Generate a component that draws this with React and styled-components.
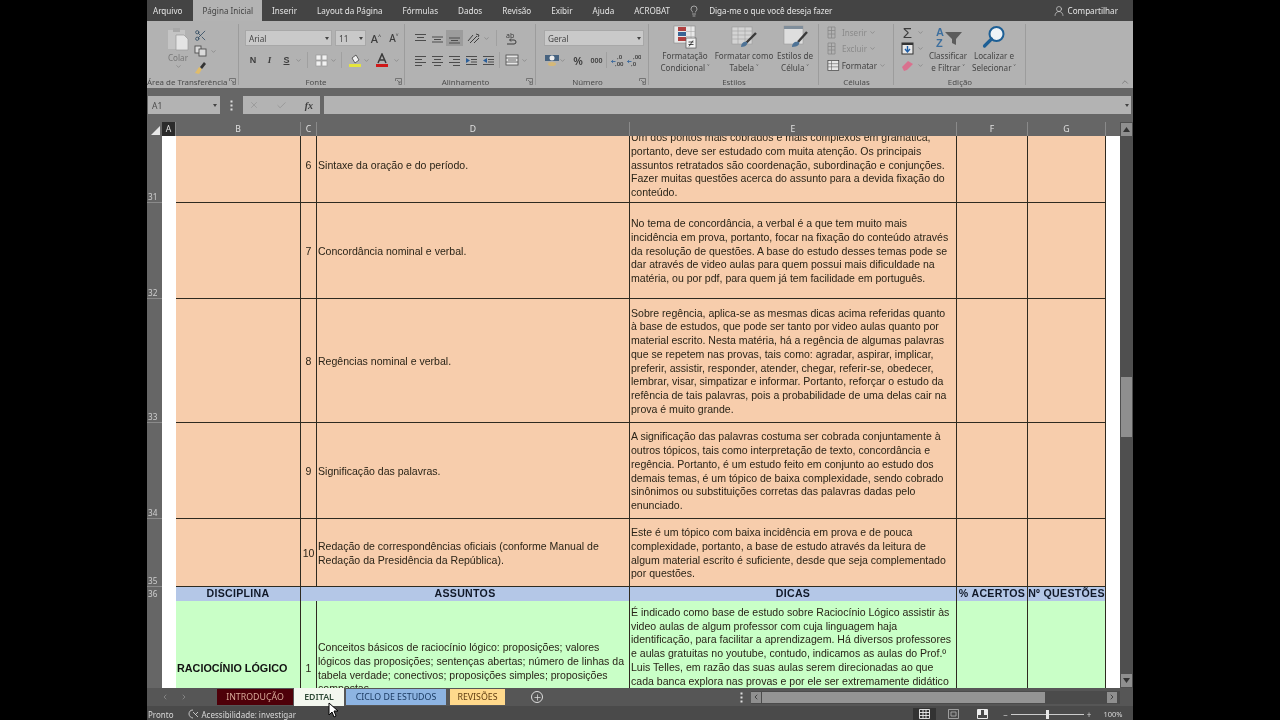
import styled, { createGlobalStyle } from "styled-components";
import { Scissors, Lightbulb, UserRound, Plus, ChevronDown, ChevronUp, ChevronLeft, ChevronRight, X, Check } from "lucide-react";

const Global = createGlobalStyle`
  html, body { margin: 0; padding: 0; background: #000; }
  #root { width: 1280px; height: 720px; overflow: hidden; }
  * { box-sizing: border-box; }
`;

const Page = styled.div`
  width: 1280px;
  height: 720px;
  display: flex;
  justify-content: center;
  background: #000;
`;

const Win = styled.div`
  position: relative;
  width: 986px;
  height: 720px;
  display: flex;
  flex-direction: column;
  background: #666;
  font-family: "Noto Sans", "Open Sans", sans-serif;
  filter: blur(0.35px);
`;

/* menu tabs */
const Menu = styled.div`
  height: 21px;
  display: flex;
  align-items: center;
  background: #444;
  color: #e4e4e4;
  font-size: 8.1px;
`;

const MenuItem = styled.div`
  height: 21px;
  line-height: 21px;
  padding: ${(p) => (p.$first ? "0 11px 0 6px" : p.$active ? "0 9px" : "0 10px")};
  background: ${(p) => (p.$active ? "#b3b3b3" : "transparent")};
  color: ${(p) => (p.$active ? "#444" : "#e4e4e4")};
`;

const Tell = styled.div`
  display: flex;
  align-items: center;
  gap: 9px;
  margin-left: 8px;
  flex: 1;
`;

const Share = styled.div`
  display: flex;
  align-items: center;
  gap: 3px;
  margin-right: 15px;
`;

/* ribbon */
const Ribbon = styled.div`
  position: relative;
  height: 67px;
  display: flex;
  background: #b2b2b2;
  color: #454545;
  font-size: 8.1px;
`;

const Group = styled.div`
  position: relative;
  width: ${(p) => p.$w}px;
  flex: none;
  display: flex;
  flex-direction: column;
  padding: ${(p) => p.$top ?? 9}px ${(p) => p.$side ?? 6}px 0;
  &::after {
    content: "";
    position: absolute;
    right: 0;
    top: 3px;
    bottom: 3px;
    width: 1px;
    background: #9c9c9c;
  }
`;

const GroupLabel = styled.div`
  position: absolute;
  left: 0;
  right: 0;
  bottom: 1px;
  padding-right: ${(p) => p.$pr ?? 0}px;
  text-align: center;
  font-size: 7.9px;
  line-height: 10px;
  color: #4a4a4a;
  white-space: nowrap;
`;

const Launcher = styled.svg`
  position: absolute;
  right: 3px;
  bottom: 3px;
  width: 7px;
  height: 7px;
`;

const Rows = styled.div`
  display: flex;
  flex-direction: column;
  gap: ${(p) => p.$gap ?? 6}px;
`;

const Line = styled.div`
  height: 16px;
  display: flex;
  align-items: center;
  gap: ${(p) => p.$gap ?? 0}px;
`;

const Select = styled.div`
  width: ${(p) => p.$w}px;
  height: 16px;
  flex: none;
  margin-right: ${(p) => p.$mr ?? 0}px;
  display: flex;
  align-items: center;
  justify-content: space-between;
  padding: 0 2px 0 3px;
  background: #c9c9c9;
  border: 1px solid #a8a8a8;
  font-size: 8.2px;
`;

const Caret = styled.span`
  width: 0;
  height: 0;
  border-left: 2.5px solid transparent;
  border-right: 2.5px solid transparent;
  border-top: 3px solid #444;
  flex: none;
`;

const Tool = styled.div`
  width: ${(p) => p.$w ?? 17}px;
  height: 16px;
  flex: none;
  display: flex;
  align-items: center;
  justify-content: center;
  background: ${(p) => (p.$on ? "#9c9c9c" : "transparent")};
  font: ${(p) => p.$font ?? "inherit"};
  color: #3d3d3d;
`;

const Chev = styled(ChevronDown).attrs({ size: 7, strokeWidth: 1.5 })`
  color: #666;
  flex: none;
`;

const VSep = styled.span`
  width: 1px;
  height: 16px;
  background: #a0a0a0;
  margin: 0 ${(p) => p.$m ?? 3}px;
  flex: none;
`;

const BigRow = styled.div`
  display: flex;
  align-items: flex-start;
`;

const Big = styled.div`
  width: ${(p) => p.$w}px;
  flex: none;
  margin-top: ${(p) => p.$mt ?? 0}px;
  display: flex;
  flex-direction: column;
  align-items: center;
  text-align: center;
  line-height: 12px;
  white-space: nowrap;
  & > svg:first-child {
    margin-bottom: 1px;
  }
`;

const Paste = styled.div`
  display: flex;
  padding-left: 15px;
`;

const PasteCol = styled.div`
  width: 32px;
  display: flex;
  flex-direction: column;
  align-items: center;
  color: #777;
  line-height: 11px;
  svg:first-child {
    margin-bottom: 1px;
  }
`;

const CellAction = styled.div`
  height: 16px;
  display: flex;
  align-items: center;
  gap: 2px;
  color: ${(p) => (p.$off ? "#8a8a8a" : "#444")};
  white-space: nowrap;
`;

const Collapse = styled(ChevronUp).attrs({ size: 10, strokeWidth: 1.3 })`
  position: absolute;
  right: 3px;
  bottom: 1px;
  color: #555;
`;

/* formula bar */
const FormulaRow = styled.div`
  height: 34px;
  display: flex;
  align-items: flex-start;
  padding-top: 8px;
  background: #666;
`;

const NameBox = styled.div`
  width: 72px;
  height: 18px;
  margin-left: 1px;
  display: flex;
  align-items: center;
  justify-content: space-between;
  padding: 0 3px 0 4px;
  background: #b3b3b3;
  font-size: 8.5px;
  color: #4d4d4d;
`;

const DotsCol = styled.div`
  width: ${(p) => p.$w}px;
  height: ${(p) => p.$h}px;
  flex: none;
  margin-left: ${(p) => (p.$auto ? "auto" : 0)};
  display: flex;
  align-items: center;
  justify-content: center;
`;

const FxBox = styled.div`
  width: 77px;
  height: 18px;
  display: flex;
  align-items: center;
  justify-content: space-between;
  padding: 0 7px 0 6px;
  background: #b3b3b3;
  color: #8b8b8b;
  font-size: 10px;
`;

const FxLabel = styled.span`
  font-family: "Liberation Serif", serif;
  font-style: italic;
  font-weight: 700;
  color: #3f3f3f;
`;

const Input = styled.div`
  flex: 1;
  height: 18px;
  margin: 0 2px 0 4px;
  display: flex;
  align-items: center;
  justify-content: flex-end;
  padding-right: 2px;
  background: #b3b3b3;
`;

/* sheet */
const Sheet = styled.div`
  display: flex;
  height: 566px;
`;

const SheetBody = styled.div`
  width: 973px;
  display: flex;
  flex-direction: column;
`;

const columns = "15px 14px 125px 16px 313px 327px 71px 78px 14px";

const ColHeads = styled.div`
  height: 14px;
  display: grid;
  grid-template-columns: ${columns};
  background: #666;
  color: #e0e0e0;
  font-size: 8.6px;
  font-family: "Noto Sans", sans-serif;
  line-height: 14px;
  text-align: center;
`;

const ColHead = styled.div`
  border-right: 1px solid ${(p) => (p.$none ? "transparent" : "#8a8a8a")};
  background: ${(p) => (p.$sel ? "#2b2b2b" : "transparent")};
`;

const Corner = styled.div`
  display: flex;
  align-items: flex-end;
  justify-content: flex-end;
  padding: 0 2px 1px 0;
`;

const Grid = styled.div`
  height: 552px;
  overflow: hidden;
  font-family: "Liberation Sans", Arial, sans-serif;
`;

const RowsWrap = styled.div`
  margin-top: -9px;
`;

const Row = styled.div`
  height: ${(p) => p.$h}px;
  display: grid;
  grid-template-columns: ${columns};
`;

const RowNum = styled.div`
  background: #666;
  color: #cfcfcf;
  font-family: "Noto Sans", sans-serif;
  font-size: 8.2px;
  line-height: 10px;
  display: flex;
  align-items: ${(p) => (p.$mid ? "center" : "flex-end")};
  padding-left: 1px;
  border-bottom: 1px solid #8a8a8a;
`;

const White = styled.div`
  background: #fff;
`;

const Cell = styled.div`
  background: ${(p) => p.$bg};
  border-right: 1px solid #2e2a20;
  border-bottom: 1px solid #2e2a20;
  display: flex;
  align-items: ${(p) => (p.$pt ? "flex-start" : "center")};
  justify-content: ${(p) => p.$justify ?? "flex-start"};
  padding: ${(p) => p.$pt ?? 2}px 1px 0 1px;
  font-size: 10.55px;
  line-height: 13.7px;
  color: #2a2418;
  white-space: pre-line;
  grid-column: ${(p) => p.$span ?? "auto"};
`;

const HeadCell = styled(Cell)`
  font-weight: 700;
  font-size: 10.6px;
  letter-spacing: 0.3px;
  color: #101828;
  white-space: nowrap;
  justify-content: center;
  padding: 0;
`;

const Subject = styled.span`
  font-weight: 700;
  font-size: 10.8px;
  color: #111;
  white-space: nowrap;
`;

/* scrollbars */
const VScroll = styled.div`
  width: 13px;
  display: flex;
  flex-direction: column;
  background: #4f4f4f;
  padding: 1px 0;
`;

const ScrollBtn = styled.div`
  width: 11px;
  height: 13px;
  margin-left: 1px;
  flex: none;
  display: flex;
  align-items: center;
  justify-content: center;
  background: #8f8f8f;
  color: #333;
`;

const VTrack = styled.div`
  flex: 1;
  padding-top: 241px;
`;

const VThumb = styled.div`
  width: 11px;
  height: 60px;
  margin-left: 1px;
  background: #8f8f8f;
`;

/* sheet tabs */
const TabsBar = styled.div`
  height: 18px;
  display: flex;
  align-items: center;
  background: #565656;
  color: #ddd;
  font-size: 8.8px;
`;

const TabNav = styled.div`
  width: 70px;
  display: flex;
  gap: 11px;
  padding-left: 14px;
  color: #9a9a9a;
`;

const Tab = styled.div`
  width: ${(p) => p.$w}px;
  margin-right: ${(p) => p.$mr ?? 1}px;
  height: ${(p) => (p.$active ? 18 : 16)}px;
  flex: none;
  display: flex;
  align-items: center;
  justify-content: center;
  background: ${(p) => p.$bg};
  color: ${(p) => p.$color};
  font-weight: ${(p) => (p.$active ? 600 : 400)};
  white-space: nowrap;
`;

const AddSheet = styled.div`
  width: 12px;
  height: 12px;
  margin-left: 25px;
  border: 1px solid #ddd;
  border-radius: 50%;
  display: flex;
  align-items: center;
  justify-content: center;
  color: #ddd;
`;

const HScroll = styled.div`
  width: 369px;
  margin-right: 13px;
  height: 13px;
  display: flex;
  align-items: center;
  background: #4b4b4b;
  color: #333;
`;

const HBtn = styled.div`
  width: 10px;
  height: 11px;
  flex: none;
  margin-left: ${(p) => (p.$end ? "auto" : "0")};
  margin-right: ${(p) => (p.$end ? "3px" : "1px")};
  display: flex;
  align-items: center;
  justify-content: center;
  background: #8f8f8f;
`;

const HThumb = styled.div`
  width: 283px;
  height: 11px;
  background: #949494;
`;

/* status bar */
const Status = styled.div`
  height: 14px;
  display: flex;
  align-items: center;
  background: #4a4a4a;
  color: #d8d8d8;
  font-size: 8px;
  line-height: 11px;
  padding: 2px 0 0 1px;
`;

const Access = styled.div`
  display: flex;
  align-items: center;
  gap: 2px;
  margin-left: 14px;
`;

const ViewBtn = styled.div`
  width: 23px;
  height: 12px;
  margin-right: 6px;
  display: flex;
  align-items: center;
  justify-content: center;
  background: ${(p) => (p.$on ? "#333" : "transparent")};
`;

const Views = styled.div`
  margin-left: auto;
  display: flex;
  align-items: center;
`;

const Zoom = styled.div`
  display: flex;
  align-items: center;
  gap: 3px;
  margin-left: 3px;
  margin-right: 10.5px;
`;

const ZoomValue = styled.span`
  margin-left: 9px;
  font-size: 7.5px;
`;

const Slider = styled.div`
  position: relative;
  width: 73px;
  height: 1px;
  background: #ccc;
  &::after {
    content: "";
    position: absolute;
    left: 35px;
    top: -4px;
    width: 3px;
    height: 9px;
    background: #e8e8e8;
  }
`;

const Pointer = styled.svg`
  position: absolute;
  left: 181px;
  top: 702px;
  width: 11px;
  height: 16px;
`;

/* ribbon drawings */
const PasteIcon = () => (
  <svg width="22" height="24" viewBox="0 0 22 24">
    <rect x="1" y="3" width="17" height="19" fill="#c4c4c4" />
    <rect x="6" y="1" width="7" height="4" fill="#a8a8a8" />
    <path d="M9 8h8l4 4v11H9z" fill="#e4e4e4" stroke="#9a9a9a" strokeWidth="0.7" />
  </svg>
);

const CopyIcon = () => (
  <svg width="13" height="12" viewBox="0 0 13 12" fill="#dadada" stroke="#4e4e4e" strokeWidth="0.9">
    <rect x="1" y="1" width="6" height="7" />
    <rect x="5" y="4" width="7" height="7" />
  </svg>
);

const BrushIcon = () => (
  <svg width="13" height="13" viewBox="0 0 13 13">
    <path d="M1 12l4-6 3 2-3 5z" fill="#e0bc6a" />
    <path d="M6 6l4-5 2 2-4 5z" fill="#333" />
  </svg>
);

const Lines = ({ rows }) => (
  <svg width="13" height="11" viewBox="0 0 13 11" stroke="#4c4c4c" strokeWidth="1">
    {rows.map(([a, b], i) => (
      <path key={i} d={`M${a} ${1.5 + i * 3}H${b}`} />
    ))}
  </svg>
);

const Indent = ({ flip }) => (
  <svg width="13" height="11" viewBox="0 0 13 11">
    <path d="M1 1.5H12M6 4.5H12M6 7H12M1 9.5H12" stroke="#4c4c4c" />
    <path d={flip ? "M5 5.5L1 3V8Z" : "M1 5.5L5 3V8Z"} fill="#2b5f9a" />
  </svg>
);

const BorderIcon = () => (
  <svg width="13" height="13" viewBox="0 0 13 13" fill="#f2f2f2" stroke="#999" strokeWidth="0.7">
    <rect x="1" y="1" width="5" height="5" />
    <rect x="7" y="1" width="5" height="5" />
    <rect x="1" y="7" width="5" height="5" />
    <rect x="7" y="7" width="5" height="5" />
  </svg>
);

const FillIcon = () => (
  <svg width="14" height="14" viewBox="0 0 14 14">
    <path d="M4 5l4-3 3 5-4 3z" fill="#f0f0f0" stroke="#444" strokeWidth="0.8" />
    <rect x="1" y="11" width="12" height="3" fill="#e6e63c" />
  </svg>
);

const FontColor = () => (
  <svg width="14" height="14" viewBox="0 0 14 14">
    <path d="M3 10L7 1l4 9M4.6 7h4.8" fill="none" stroke="#3a3a3a" strokeWidth="1.5" />
    <rect x="1" y="11" width="12" height="3" fill="#d01818" />
  </svg>
);

const OrientIcon = () => (
  <svg width="13" height="13" viewBox="0 0 13 13" stroke="#3f3f3f" fill="none">
    <path d="M1 9L6 3M3 11l7-7M7 11l5-5" />
    <path d="M9 2l3 1-1 2" />
  </svg>
);

const WrapIcon = () => (
  <svg width="13" height="15" viewBox="0 0 13 15" fill="none" stroke="#3a3a3a">
    <text x="1" y="7" fontSize="7" fontFamily="Noto Sans" stroke="none" fill="#3a3a3a">ab</text>
    <path d="M2 13h7a2 2 0 0 0 0-4H5M6 7.5L4.5 9l1.5 1.5" />
  </svg>
);

const MergeIcon = () => (
  <svg width="14" height="12" viewBox="0 0 14 12" fill="#e6e6e6" stroke="#4a4a4a" strokeWidth="0.8">
    <rect x="1" y="1" width="12" height="10" />
    <path d="M1 4h12M1 8h12M3 6h8" />
  </svg>
);

const MoneyIcon = () => (
  <svg width="14" height="13" viewBox="0 0 14 13">
    <rect x="0" y="1" width="14" height="6" fill="#46627f" />
    <circle cx="7" cy="4" r="2.5" fill="#eee" />
    <ellipse cx="7" cy="10" rx="4" ry="2" fill="#d4b879" />
  </svg>
);

const DecimalIcon = ({ top, bottom }) => (
  <svg width="14" height="14" viewBox="0 0 14 14" fill="#3f3f3f" fontFamily="Noto Sans" fontSize="6" fontWeight="600">
    <text x="6" y="6">{top}</text>
    <text x="4" y="13">{bottom}</text>
    <path d="M0.5 8.5h4M0.5 8.5l1.6-1.4M0.5 8.5l1.6 1.4" stroke="#2b5f9a" strokeWidth="0.8" fill="none" />
  </svg>
);

const CondIcon = () => (
  <svg width="24" height="24" viewBox="0 0 24 24">
    <rect x="1" y="1" width="21" height="17" fill="#e8e8e8" stroke="#888" strokeWidth="0.6" />
    <rect x="5" y="2" width="8" height="4" fill="#b04040" />
    <rect x="5" y="7" width="8" height="4" fill="#3a6595" />
    <rect x="5" y="12" width="8" height="4" fill="#b04040" />
    <path d="M13 6.5H22M13 11.5H22M18 1V18" stroke="#aaa" strokeWidth="0.6" />
    <rect x="13" y="13" width="10" height="10" fill="#f2f2f2" stroke="#555" strokeWidth="0.7" />
    <path d="M15.5 17h5M15.5 19.5h5M20 15.5l-4 6" stroke="#222" strokeWidth="0.8" />
  </svg>
);

const TableIcon = () => (
  <svg width="26" height="24" viewBox="0 0 26 24">
    <rect x="1" y="2" width="20" height="17" fill="#d4d4d4" stroke="#999" strokeWidth="0.6" />
    <path d="M1 6H21M1 10H21M1 14H21M7 2V19M14 2V19" stroke="#a8a8a8" strokeWidth="0.7" />
    <path d="M25 8L15 18" stroke="#3a3a3a" strokeWidth="2.4" />
    <path d="M10 22c0-4 3-6 6-5 1 2-1 5-6 5z" fill="#4e7396" />
  </svg>
);

const StyleIcon = () => (
  <svg width="26" height="24" viewBox="0 0 26 24">
    <rect x="2" y="1" width="19" height="18" fill="#dedede" stroke="#999" strokeWidth="0.6" />
    <rect x="2" y="1" width="19" height="3" fill="#7f8d9a" />
    <path d="M25 7L16 17" stroke="#3a3a3a" strokeWidth="2.4" />
    <path d="M10 22c0-4 3-6 7-5 1 2-1 5-7 5z" fill="#4e7396" />
  </svg>
);

const MiniCells = ({ color }) => (
  <svg width="13" height="13" viewBox="0 0 13 13" fill="none" stroke={color} strokeWidth="0.8">
    <path d="M1 1h7v11H1zM1 4.5h7M1 8h7M4.5 1v11" />
  </svg>
);

const FormatCells = () => (
  <svg width="14" height="13" viewBox="0 0 14 13">
    <rect x="1" y="1" width="12" height="11" fill="#e6e6e6" stroke="#444" strokeWidth="0.8" />
    <path d="M1 4.5h12M1 8h12M5 1v11" stroke="#666" strokeWidth="0.7" />
  </svg>
);

const FillDown = () => (
  <svg width="13" height="13" viewBox="0 0 13 13">
    <rect x="1" y="1" width="11" height="11" fill="#e8e8e8" stroke="#333" />
    <rect x="1" y="1" width="11" height="2" fill="#333" />
    <path d="M6.5 4v5M4 7l2.5 3L9 7" stroke="#1f5fa8" fill="none" strokeWidth="1.4" />
  </svg>
);

const Eraser = () => (
  <svg width="13" height="13" viewBox="0 0 13 13">
    <path d="M1 8l6-6 5 3-6 6-3 1z" fill="#d9718e" />
  </svg>
);

const SortIcon = () => (
  <svg width="30" height="24" viewBox="0 0 30 24">
    <text x="3" y="11" fontSize="11" fontFamily="Liberation Sans" fontWeight="700" fill="#3d6f9e">A</text>
    <text x="3" y="22" fontSize="11" fontFamily="Liberation Sans" fontWeight="700" fill="#3d6f9e">Z</text>
    <path d="M12 7h17l-6 7v6l-4-2v-4z" fill="#5c5c5c" />
  </svg>
);

const FindIcon = () => (
  <svg width="24" height="24" viewBox="0 0 24 24">
    <circle cx="14.5" cy="9" r="7" fill="#eef3f7" stroke="#1d5f95" strokeWidth="2" />
    <path d="M9.5 14L2.5 21" stroke="#1d5f95" strokeWidth="3.2" strokeLinecap="round" />
  </svg>
);

const VDots = ({ color }) => (
  <svg width="3" height="11" viewBox="0 0 3 11" fill={color}>
    <rect x="0.5" y="0.5" width="2" height="2" />
    <rect x="0.5" y="4.5" width="2" height="2" />
    <rect x="0.5" y="8.5" width="2" height="2" />
  </svg>
);

const Tri = ({ up }) => (
  <svg width="7" height="5" viewBox="0 0 7 5" fill="#333">
    <path d={up ? "M3.5 0L7 5H0Z" : "M3.5 5L7 0H0Z"} />
  </svg>
);

const Launch = () => (
  <Launcher viewBox="0 0 7 7" fill="none" stroke="#666" strokeWidth="0.8">
    <path d="M0.5 3V0.5H6.5V6.5H3.5M2 2l3 3M5 3v2H3" />
  </Launcher>
);

const GridView = () => (
  <svg width="11" height="10" viewBox="0 0 11 10" fill="none" stroke="#eee" strokeWidth="0.9">
    <path d="M.5.5h10v9H.5zM.5 3.5h10M.5 6.5h10M4 .5v9M7 .5v9" />
  </svg>
);

const PageView = () => (
  <svg width="11" height="10" viewBox="0 0 11 10" fill="none" stroke="#a8a8a8" strokeWidth="0.9">
    <path d="M.5.5h10v9H.5zM3 3h5v4H3z" />
  </svg>
);

const BreakView = () => (
  <svg width="11" height="10" viewBox="0 0 11 10">
    <path d="M.5.5h10v9H.5z" fill="none" stroke="#eee" />
    <path d="M1 1h3v5H1zM7 1h3v5H7z" fill="#eee" />
  </svg>
);

const Access11y = () => (
  <svg width="12" height="10" viewBox="0 0 12 10" fill="none" stroke="#cfcfcf" strokeWidth="0.9">
    <path d="M5 1C2 1 1 3 1 5s2 4 4 4M5 3l5 5M10 3L7 6" />
  </svg>
);

const peach = "#f7cdac";
const green = "#c9ffc7";
const blue = "#b4c7e7";

const rows = [
  {
    n: "31",
    h: 76,
    c: "6",
    d: "Sintaxe da oração e do período.",
    e: "Um dos pontos mais cobrados e mais complexos em gramática,\nportanto, deve ser estudado com muita atenção.  Os principais\nassuntos retratados são coordenação, subordinação e conjunções.\nFazer muitas questões acerca do assunto para a devida fixação do\nconteúdo.",
  },
  {
    n: "32",
    h: 96,
    c: "7",
    d: "Concordância nominal e verbal.",
    e: "No tema de concordância, a verbal é a que tem muito mais\nincidência em prova, portanto, focar na fixação do conteúdo através\nda resolução de questões. A base do estudo desses temas pode se\ndar através de video aulas para quem possui mais dificuldade na\nmatéria, ou por pdf, para quem já tem facilidade em português.",
  },
  {
    n: "33",
    h: 124,
    c: "8",
    d: "Regências nominal e verbal.",
    e: "Sobre regência, aplica-se as mesmas dicas acima referidas quanto\nà base de estudos, que pode ser tanto por video aulas quanto por\nmaterial escrito.  Nesta matéria, há a regência de algumas palavras\nque se repetem nas provas, tais como: agradar, aspirar, implicar,\npreferir, assistir, responder, atender, chegar, referir-se, obedecer,\nlembrar, visar, simpatizar e informar. Portanto, reforçar o estudo da\nrefência de tais palavras, pois a probabilidade de uma delas cair na\nprova é muito grande.",
  },
  {
    n: "34",
    h: 96,
    c: "9",
    d: "Significação das palavras.",
    e: "A significação das palavras costuma ser cobrada conjuntamente à\noutros tópicos, tais como interpretação de texto, concordância e\nregência. Portanto, é um estudo feito em conjunto ao estudo dos\ndemais temas, é um tópico de baixa complexidade, sendo cobrado\nsinônimos ou substituições corretas das palavras dadas pelo\nenunciado.",
  },
  {
    n: "35",
    h: 68,
    c: "10",
    d: "Redação de correspondências oficiais (conforme Manual de\nRedação da Presidência da República).",
    e: "Este é um tópico com baixa incidência em prova e de pouca\ncomplexidade, portanto, a base de estudo através da leitura de\nalgum material escrito é suficiente, desde que seja complementado\npor questões.",
  },
];

const Ac = ({ c, w = 17 }) => <Tool $w={w}>{c}</Tool>;

export default function App() {
  return (
    <Page>
      <Global />
      <Win>
        <Menu>
          <MenuItem $first>Arquivo</MenuItem>
          <MenuItem $active>Página Inicial</MenuItem>
          <MenuItem>Inserir</MenuItem>
          <MenuItem>Layout da Página</MenuItem>
          <MenuItem>Fórmulas</MenuItem>
          <MenuItem>Dados</MenuItem>
          <MenuItem>Revisão</MenuItem>
          <MenuItem>Exibir</MenuItem>
          <MenuItem>Ajuda</MenuItem>
          <MenuItem>ACROBAT</MenuItem>
          <Tell>
            <Lightbulb size={12} strokeWidth={1.2} />
            Diga-me o que você deseja fazer
          </Tell>
          <Share>
            <UserRound size={12} strokeWidth={1.2} />
            Compartilhar
          </Share>
        </Menu>

        <Ribbon>
          <Group $w={92} $top={6} $side={0}>
            <Paste>
              <PasteCol>
                <PasteIcon />
                Colar
                <Chev />
              </PasteCol>
              <Rows $gap={0}>
                <Line><Scissors size={13} strokeWidth={1.5} color="#2f4a60" /></Line>
                <Line $gap={3}><CopyIcon /><Chev /></Line>
                <Line><BrushIcon /></Line>
              </Rows>
            </Paste>
            <GroupLabel $pr={14}>Área de Transferência</GroupLabel>
            <Launch />
          </Group>

          <Group $w={166}>
            <Rows>
              <Line>
                <Select $w={87} $mr={3}>Arial<Caret /></Select>
                <Select $w={31} $mr={1}>11<Caret /></Select>
                <Tool $w={18} $font="500 11px 'Noto Sans'">A˄</Tool>
                <Tool $w={18} $font="500 10px 'Noto Sans'">A˅</Tool>
              </Line>
              <Line>
                <Tool $w={16} $font="700 9px 'Liberation Sans'">N</Tool>
                <Tool $w={17} $font="italic 700 9px 'Liberation Serif'">I</Tool>
                <Tool $w={17} $font="700 9px 'Liberation Sans'"><u>S</u></Tool>
                <Chev />
                <VSep $m={5} />
                <Tool $w={17}><BorderIcon /></Tool>
                <Chev />
                <VSep $m={4} />
                <Tool $w={17}><FillIcon /></Tool>
                <Chev />
                <Tool $w={23}><FontColor /></Tool>
                <Chev />
              </Line>
            </Rows>
            <GroupLabel $pr={12}>Fonte</GroupLabel>
            <Launch />
          </Group>

          <Group $w={131} $side={7}>
            <Rows>
              <Line>
                <Ac c={<Lines rows={[[1, 12], [3, 10], [1, 12]]} />} />
                <Ac c={<svg width="13" height="11" viewBox="0 0 13 11" stroke="#4c4c4c"><path d="M1 4H12M3 6.5H10M1 9H12" /></svg>} />
                <Tool $on><svg width="13" height="11" viewBox="0 0 13 11" stroke="#4c4c4c"><path d="M1 5H12M3 7.5H10M1 10H12" /></svg></Tool>
                <Tool $w={20}><OrientIcon /></Tool>
                <Chev />
                <VSep $m={6} />
                <Tool $w={17}><WrapIcon /></Tool>
              </Line>
              <Line>
                <Ac c={<Lines rows={[[1, 12], [1, 8], [1, 12], [1, 8]]} />} />
                <Ac c={<Lines rows={[[1, 12], [3, 10], [1, 12], [3, 10]]} />} />
                <Ac c={<Lines rows={[[1, 12], [5, 12], [1, 12], [5, 12]]} />} />
                <Ac c={<Indent flip />} />
                <Ac c={<Indent />} />
                <VSep $m={2} />
                <Tool $w={19}><MergeIcon /></Tool>
                <Chev />
              </Line>
            </Rows>
            <GroupLabel $pr={10}>Alinhamento</GroupLabel>
            <Launch />
          </Group>

          <Group $w={113} $side={8}>
            <Rows>
              <Select $w={100}>Geral<Caret /></Select>
              <Line>
                <Tool $w={15}><MoneyIcon /></Tool>
                <Chev />
                <Tool $w={24} $font="600 11px 'Noto Sans'">%</Tool>
                <Tool $w={13} $font="600 7px 'Noto Sans'">000</Tool>
                <VSep $m={3} />
                <Tool $w={16}><DecimalIcon top=",0" bottom=",00" /></Tool>
                <Tool $w={16}><DecimalIcon top=",00" bottom=",0" /></Tool>
              </Line>
            </Rows>
            <GroupLabel $pr={10}>Número</GroupLabel>
            <Launch />
          </Group>

          <Group $w={170} $top={4} $side={7}>
            <BigRow>
              <Big $w={58}><CondIcon />Formatação<br />Condicional ˅</Big>
              <Big $w={60}><TableIcon />Formatar como<br />Tabela ˅</Big>
              <Big $w={42}><StyleIcon />Estilos de<br />Célula ˅</Big>
            </BigRow>
            <GroupLabel>Estilos</GroupLabel>
          </Group>

          <Group $w={75} $top={3} $side={8}>
            <Rows $gap={0.5}>
              <CellAction $off><MiniCells color="#888" />Inserir <Chev /></CellAction>
              <CellAction $off><MiniCells color="#888" />Excluir <Chev /></CellAction>
              <CellAction><FormatCells />Formatar <Chev /></CellAction>
            </Rows>
            <GroupLabel>Células</GroupLabel>
          </Group>

          <Group $w={132} $top={3} $side={7}>
            <BigRow>
              <Rows $gap={0.5}>
                <Line $gap={3}><Tool $w={13} $font="500 15px 'Liberation Sans'">Σ</Tool><Chev /></Line>
                <Line $gap={3}><FillDown /><Chev /></Line>
                <Line $gap={3}><Eraser /><Chev /></Line>
              </Rows>
              <Big $w={48} $mt={1}>
                <SortIcon />
                Classificar<br />e Filtrar ˅
              </Big>
              <Big $w={44} $mt={1}>
                <FindIcon />
                Localizar e<br />Selecionar ˅
              </Big>
            </BigRow>
            <GroupLabel>Edição</GroupLabel>
          </Group>
          <Collapse />
        </Ribbon>

        <FormulaRow>
          <NameBox>A1<Caret /></NameBox>
          <DotsCol $w={23} $h={18}><VDots color="#ddd" /></DotsCol>
          <FxBox>
            <X size={10} strokeWidth={1.4} />
            <Check size={11} strokeWidth={1.4} />
            <FxLabel>fx</FxLabel>
          </FxBox>
          <Input><Caret /></Input>
        </FormulaRow>

        <Sheet>
          <SheetBody>
            <ColHeads>
              <Corner>
                <svg width="9" height="9" viewBox="0 0 9 9"><path d="M9 0V9H0Z" fill="#e8e8e8" /></svg>
              </Corner>
              <ColHead $sel>A</ColHead>
              <ColHead>B</ColHead>
              <ColHead>C</ColHead>
              <ColHead>D</ColHead>
              <ColHead>E</ColHead>
              <ColHead>F</ColHead>
              <ColHead>G</ColHead>
              <ColHead $none />
            </ColHeads>
            <Grid>
              <RowsWrap>
                {rows.map((r) => (
                  <Row key={r.n} $h={r.h}>
                    <RowNum>{r.n}</RowNum>
                    <White />
                    <Cell $bg={peach} />
                    <Cell $bg={peach} $justify="center">{r.c}</Cell>
                    <Cell $bg={peach}>{r.d}</Cell>
                    <Cell $bg={peach}>{r.e}</Cell>
                    <Cell $bg={peach} />
                    <Cell $bg={peach} />
                    <White />
                  </Row>
                ))}
                <Row $h={14}>
                  <RowNum $mid>36</RowNum>
                  <White />
                  <HeadCell $bg={blue}>DISCIPLINA</HeadCell>
                  <HeadCell $bg={blue} $span="span 2">ASSUNTOS</HeadCell>
                  <HeadCell $bg={blue}>DICAS</HeadCell>
                  <HeadCell $bg={blue}>% ACERTOS</HeadCell>
                  <HeadCell $bg={blue}>Nº QUESTÕES</HeadCell>
                  <White />
                </Row>
                <Row $h={134}>
                  <RowNum>37</RowNum>
                  <White />
                  <Cell $bg={green}><Subject>RACIOCÍNIO LÓGICO</Subject></Cell>
                  <Cell $bg={green} $justify="center">1</Cell>
                  <Cell $bg={green}>
                    {"Conceitos básicos de raciocínio lógico: proposições; valores\nlógicos das proposições; sentenças abertas; número de linhas da\ntabela verdade; conectivos; proposições simples; proposições\ncompostas."}
                  </Cell>
                  <Cell $bg={green} $pt={5}>
                    {"É indicado como base de estudo sobre Raciocínio Lógico assistir às\nvideo aulas de algum professor com cuja linguagem haja\nidentificação, para facilitar a aprendizagem. Há diversos professores\ne aulas gratuitas no youtube, contudo, indicamos as aulas do Prof.º\nLuis Telles, em razão das suas aulas serem direcionadas ao que\ncada banca explora nas provas e por ele ser extremamente didático"}
                  </Cell>
                  <Cell $bg={green} />
                  <Cell $bg={green} />
                  <White />
                </Row>
              </RowsWrap>
            </Grid>
          </SheetBody>
          <VScroll>
            <ScrollBtn><Tri up /></ScrollBtn>
            <VTrack><VThumb /></VTrack>
            <ScrollBtn><Tri /></ScrollBtn>
          </VScroll>
        </Sheet>

        <TabsBar>
          <TabNav>
            <ChevronLeft size={8} strokeWidth={2} />
            <ChevronRight size={8} strokeWidth={2} />
          </TabNav>
          <Tab $w={76} $bg="#4e0009" $color="#d8a898">INTRODUÇÃO</Tab>
          <Tab $w={50} $mr={2} $bg="#f3f7ef" $color="#2f4a38" $active>EDITAL</Tab>
          <Tab $w={100} $mr={4} $bg="#8db4e2" $color="#17365d">CICLO DE ESTUDOS</Tab>
          <Tab $w={55} $bg="#ffd98c" $color="#5d3b10">REVISÕES</Tab>
          <AddSheet><Plus size={9} strokeWidth={2} /></AddSheet>
          <DotsCol $w={20} $h={18} $auto><VDots color="#ddd" /></DotsCol>
          <HScroll>
            <HBtn><ChevronLeft size={8} strokeWidth={2.5} /></HBtn>
            <HThumb />
            <HBtn $end><ChevronRight size={8} strokeWidth={2.5} /></HBtn>
          </HScroll>
        </TabsBar>

        <Status>
          Pronto
          <Access><Access11y />Acessibilidade: investigar</Access>
          <Views>
            <ViewBtn $on><GridView /></ViewBtn>
            <ViewBtn><PageView /></ViewBtn>
            <ViewBtn><BreakView /></ViewBtn>
          </Views>
          <Zoom>
            −
            <Slider />
            +
            <ZoomValue>100%</ZoomValue>
          </Zoom>
        </Status>

        <Pointer viewBox="0 0 11 16">
          <path d="M1 1v12l3-3 2 5 2-1-2-5h4z" fill="#fff" stroke="#000" strokeWidth="1" />
        </Pointer>
      </Win>
    </Page>
  );
}
